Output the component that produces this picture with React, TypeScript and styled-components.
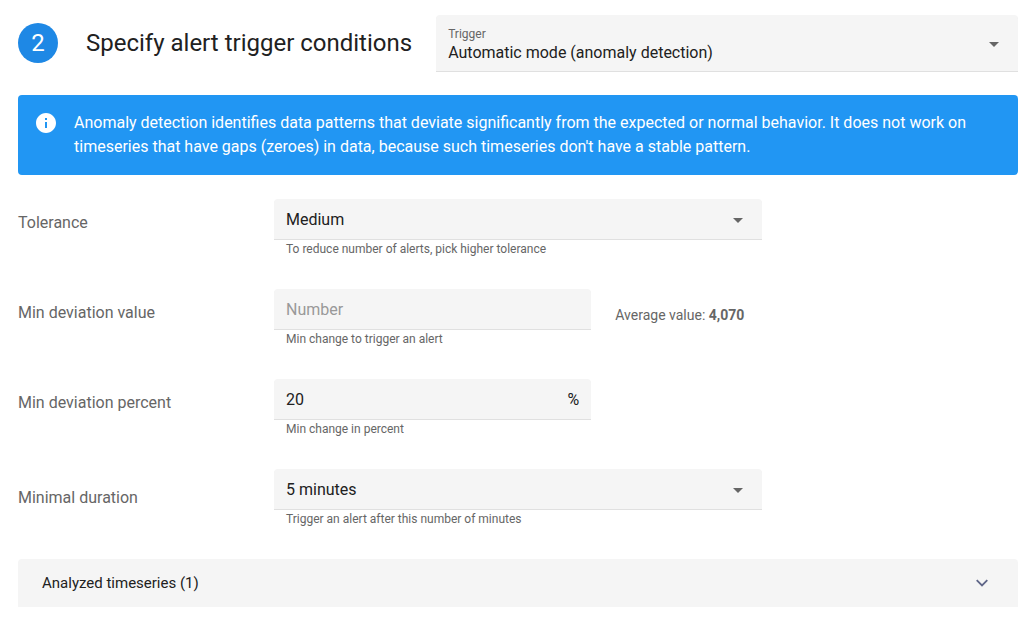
import React, { useId, useState } from "react";
import styled, { createGlobalStyle } from "styled-components";

const GlobalStyle = createGlobalStyle`
  *, *::before, *::after {
    box-sizing: border-box;
  }
  body {
    margin: 0;
    background: #fff;
    color: #212121;
    font-family: Roboto, "Liberation Sans", sans-serif;
    font-size: 16px;
    line-height: 24px;
  }
`;

const Page = styled.main`
  display: flex;
  flex-direction: column;
  gap: 24px;
  padding: 15px 17px 15px 18px;
`;

const Header = styled.header`
  display: flex;
  align-items: center;
  gap: 24px;
`;

const StepNumber = styled.span`
  flex: none;
  width: 40px;
  margin-right: 4px;
  border-radius: 50%;
  background: #1e88e5;
  color: #fff;
  font-size: 24px;
  line-height: 40px;
  text-align: center;
`;

const Title = styled.h1`
  flex: none;
  margin: 0;
  font-size: 24px;
  line-height: 32px;
  font-weight: 400;
`;

const FieldBox = styled.div<{ $grow?: boolean }>`
  position: relative;
  display: flex;
  flex-direction: column;
  flex: ${(p) => (p.$grow ? "1" : "none")};
  min-width: 0;
  border-radius: 4px 4px 0 0;
  background: #f5f5f5;
  box-shadow: 0 1px 0 #e0e0e0;
`;

const FloatingLabel = styled.label`
  position: absolute;
  top: 11px;
  left: 12px;
  color: #666;
  font-size: 12px;
  line-height: 16px;
  pointer-events: none;
`;

const Select = styled.select<{ $labelled?: boolean }>`
  appearance: none;
  width: 100%;
  height: ${(p) => (p.$labelled ? "56px" : "40px")};
  margin: 0;
  padding: ${(p) => (p.$labelled ? "20px 48px 0 12px" : "2px 48px 0 12px")};
  border: 0;
  border-radius: 4px 4px 0 0;
  background: transparent;
  color: #212121;
  font: inherit;
`;

const ArrowSvg = styled.svg`
  position: absolute;
  top: 50%;
  right: 19px;
  margin-top: -1px;
  pointer-events: none;
`;

const InputLine = styled.div`
  display: flex;
  align-items: baseline;
  height: 40px;
  padding: 0 12px;
`;

const Input = styled.input`
  flex: 1;
  min-width: 0;
  height: 40px;
  padding: 0;
  border: 0;
  background: transparent;
  color: #212121;
  font: inherit;

  &::placeholder {
    color: #999;
    opacity: 1;
  }
`;

const Notice = styled.section`
  display: flex;
  gap: 16px;
  padding: 16px;
  border-radius: 4px;
  background: #2196f3;
  color: #fff;
`;

const NoticeIcon = styled.svg`
  flex: none;
`;

const NoticeText = styled.p`
  margin: 0;
`;

const Rows = styled.form`
  display: flex;
  flex-direction: column;
  gap: 32px;
  padding-bottom: 8px;
`;

const Row = styled.div<{ $centered?: boolean }>`
  display: grid;
  grid-template-columns: repeat(12, minmax(0, 1fr));
  column-gap: 24px;
  align-items: ${(p) => (p.$centered ? "center" : "start")};
`;

const RowLabel = styled.label<{ $centered?: boolean }>`
  grid-column: span 3;
  padding-top: ${(p) => (p.$centered ? "0" : "12px")};
  color: #666;
`;

const Control = styled.div<{ $span: number }>`
  grid-column: span ${(p) => p.$span};
`;

const Hint = styled.div`
  padding: 2px 12px 0;
  color: #666;
  font-size: 12px;
  line-height: 16px;
`;

const Average = styled.p`
  grid-column: span 5;
  margin: 0;
  padding-top: 16px;
  color: #666;
  font-size: 14px;
  line-height: 20px;
`;

const Panel = styled.button`
  display: flex;
  align-items: center;
  justify-content: space-between;
  width: 100%;
  height: 48px;
  padding: 0 30px 0 24px;
  border: 0;
  border-radius: 4px 4px 0 0;
  background: #f5f5f5;
  color: #212121;
  font: inherit;
  font-size: 15px;
  text-align: left;
  cursor: pointer;
`;

const Arrow = () => (
  <ArrowSvg width="10" height="5" viewBox="0 0 10 5" aria-hidden="true">
    <path d="M0 0l5 5 5-5z" fill="#666" />
  </ArrowSvg>
);

type RowProps = {
  label: string;
  hint: string;
  span: number;
  centered?: boolean;
  aside?: React.ReactNode;
  children: (ids: { id: string; "aria-describedby": string }) => React.ReactNode;
};

function FormRow({ label, hint, span, centered, aside, children }: RowProps) {
  const id = useId();
  const hintId = `${id}-hint`;
  return (
    <Row $centered={centered}>
      <RowLabel htmlFor={id} $centered={centered}>
        {label}
      </RowLabel>
      <Control $span={span}>
        <FieldBox>{children({ id, "aria-describedby": hintId })}</FieldBox>
        <Hint id={hintId}>{hint}</Hint>
      </Control>
      {aside}
    </Row>
  );
}

export default function App() {
  const [deviation, setDeviation] = useState("");
  const [percent, setPercent] = useState("20");
  const [open, setOpen] = useState(false);

  return (
    <>
      <GlobalStyle />
      <Page>
        <Header>
          <StepNumber>2</StepNumber>
          <Title>Specify alert trigger conditions</Title>
          <FieldBox $grow>
            <FloatingLabel htmlFor="trigger">Trigger</FloatingLabel>
            <Select id="trigger" $labelled>
              <option>Automatic mode (anomaly detection)</option>
            </Select>
            <Arrow />
          </FieldBox>
        </Header>

        <Notice>
          <NoticeIcon width="24" height="24" viewBox="0 0 24 24" aria-hidden="true">
            <path
              fill="#fff"
              d="M12 2C6.480 2 2 6.480 2 12s4.480 10 10 10 10-4.480 10-10S17.520 2 12 2zm1 15h-2v-6h2v6zm0-8h-2V7h2v2z"
            />
          </NoticeIcon>
          <NoticeText>
            Anomaly detection identifies data patterns that deviate significantly from the expected
            or normal behavior. It does not work on timeseries that have gaps (zeroes) in data,
            because such timeseries don't have a stable pattern.
          </NoticeText>
        </Notice>

        <Rows>
          <FormRow
            label="Tolerance"
            hint="To reduce number of alerts, pick higher tolerance"
            span={6}
          >
            {(ids) => (
              <>
                <Select {...ids}>
                  <option>Medium</option>
                </Select>
                <Arrow />
              </>
            )}
          </FormRow>
          <FormRow
            label="Min deviation value"
            hint="Min change to trigger an alert"
            span={4}
            aside={
              <Average>
                Average value: <strong>4,070</strong>
              </Average>
            }
          >
            {(ids) => (
              <InputLine>
                <Input
                  {...ids}
                  inputMode="numeric"
                  placeholder="Number"
                  value={deviation}
                  onChange={(e) => setDeviation(e.target.value)}
                />
              </InputLine>
            )}
          </FormRow>
          <FormRow label="Min deviation percent" hint="Min change in percent" span={4}>
            {(ids) => (
              <InputLine>
                <Input
                  {...ids}
                  inputMode="numeric"
                  value={percent}
                  onChange={(e) => setPercent(e.target.value)}
                />
                <span>%</span>
              </InputLine>
            )}
          </FormRow>
          <FormRow
            label="Minimal duration"
            hint="Trigger an alert after this number of minutes"
            span={6}
            centered
          >
            {(ids) => (
              <>
                <Select {...ids}>
                  <option>5 minutes</option>
                </Select>
                <Arrow />
              </>
            )}
          </FormRow>
        </Rows>

        <Panel type="button" aria-expanded={open} onClick={() => setOpen(!open)}>
          Analyzed timeseries (1)
          <svg width="12" height="8" viewBox="0 0 12 8" aria-hidden="true">
            <path d="M0.700 1.200L6 6.500l5.300-5.300" fill="none" stroke="#5f6688" strokeWidth="1.800" />
          </svg>
        </Panel>
      </Page>
    </>
  );
}
